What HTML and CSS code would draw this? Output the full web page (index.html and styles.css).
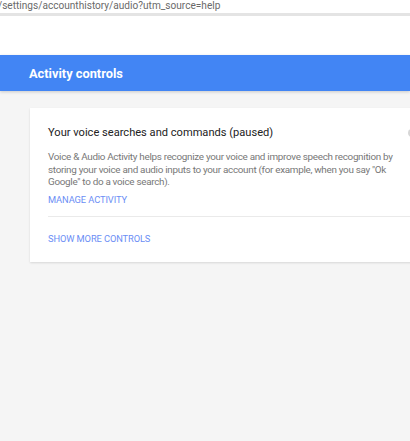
FILE: index.html
```html
<!DOCTYPE html>
<html>
<head>
<meta charset="utf-8">
<link rel="stylesheet" href="styles.css">
</head>
<body>
<div class="urlbar"><span class="url">/settings/accounthistory/audio?utm_source=help</span></div>
<div class="blank"></div>
<header class="appbar"><h1 class="title">Activity controls</h1></header>
<main class="content">
  <section class="card">
    <div class="item">
      <div class="item-head">
        <h2 class="item-title">Your voice searches and commands (paused)</h2>
        <span class="switch"></span>
      </div>
      <p class="item-desc">Voice &amp; Audio Activity helps recognize your voice and improve speech recognition by storing your voice and audio inputs to your account (for example, when you say "Ok Google" to do a voice search).</p>
      <a class="link">MANAGE ACTIVITY</a>
    </div>
    <div class="more"><a class="link">SHOW MORE CONTROLS</a></div>
  </section>
</main>
</body>
</html>
```

FILE: styles.css
```css
html, body {
  margin: 0;
  padding: 0;
  height: 100%;
  overflow: hidden;
}
body {
  background: #f5f5f5;
  font-family: Roboto, "Liberation Sans", sans-serif;
}
.urlbar {
  height: 13px;
  background: #fff;
  border-bottom: 3px solid #e4e4e4;
  overflow: hidden;
  white-space: nowrap;
}
.url {
  display: block;
  margin-left: -2px;
  margin-top: -2px;
  font-family: Roboto, sans-serif;
  font-size: 10.1px;
  line-height: 16px;
  color: #6a6a6a;
}
.blank {
  height: 39px;
  background: #fff;
}
.appbar {
  height: 36px;
  background: #4285f4;
  display: flex;
  align-items: center;
  padding-left: 29px;
  box-shadow: 0 1px 3px rgba(0,0,0,0.18);
  position: relative;
}
.title {
  margin: 0;
  font-size: 12.8px;
  font-weight: 700;
  color: #fff;
}
.content {
  padding: 17px 0 0 30px;
}
.card {
  background: #fff;
  box-shadow: 0 1px 2px rgba(0,0,0,0.12);
  padding: 0 22px 0 18px;
  width: 390px;
}
.item {
  padding: 17px 0 9px;
  border-bottom: 1px solid #eaeaea;
}
.item-head {
  display: flex;
  justify-content: space-between;
  align-items: center;
}
.switch {
  width: 30px;
  height: 8px;
  border-radius: 4px;
  background: #d6d6d6;
}
.item-title {
  margin: 0;
  font-size: 11.1px;
  font-weight: 400;
  line-height: 16px;
  color: #222;
}
.item-desc {
  margin: 10px 0 0;
  font-size: 9.9px;
  letter-spacing: -0.3px;
  line-height: 12.5px;
  color: #777;
  width: 350px;
}
.link {
  display: block;
  font-size: 9.3px;
  letter-spacing: -0.1px;
  line-height: 14px;
  color: #6b8ef5;
  text-decoration: none;
}
.item .link {
  margin-top: 4px;
}
.more {
  padding: 15px 0 16px;
}
```
